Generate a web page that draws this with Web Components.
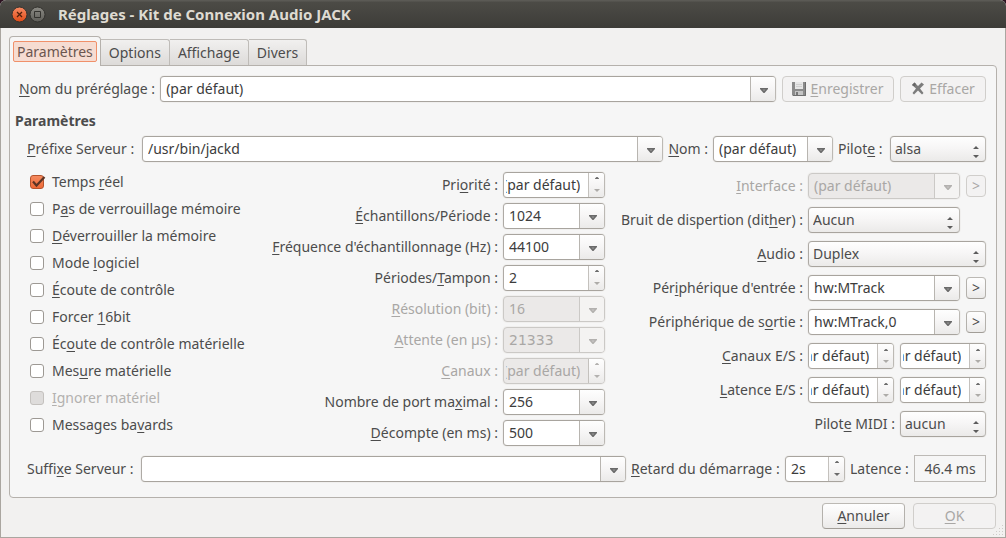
<!DOCTYPE html>
<html lang="fr">
<head>
<meta charset="utf-8">
<title>Réglages - Kit de Connexion Audio JACK</title>
<style>
  html { background: #2c1220; }
  body {
    margin: 0;
    font: 14px/20px "Noto Sans", "Open Sans", sans-serif;
    color: #4c4c4c;
  }
  u {
    text-decoration: underline 1px;
    text-underline-offset: 2px;
    text-decoration-skip-ink: none;
  }
</style>
</head>
<body>

<dialog-window>
  <title-bar slot="title">Réglages - Kit de Connexion Audio JACK</title-bar>

  <tab-list>
    <tab-item selected>Paramètres</tab-item>
    <tab-item>Options</tab-item>
    <tab-item>Affichage</tab-item>
    <tab-item>Divers</tab-item>
  </tab-list>

  <tab-panel>
    <form-row>
      <combo-field stretch value="(par défaut)" style="--label: 136px"><u>N</u>om du préréglage :</combo-field>
      <push-button disabled style="--width: 112px">
        <svg slot="icon" width="16" height="16" viewBox="0 0 16 16" aria-hidden="true">
          <path d="M0 1h14v14H1L0 14z" fill="#8b8b8b"/>
          <path d="M3 1h8v7H3z" fill="#e6e6e6"/>
          <path d="M4 3.500h6M4 5.500h6" stroke="#cfcfcf"/>
          <path d="M3 10h8v5H3z" fill="#c4c4c4"/>
          <path d="M4 11h2v3H4z" fill="#777"/>
          <path d="M13.500 1v13.500H1" fill="none" stroke="#6e6e6e"/>
        </svg><u>E</u>nregistrer</push-button>
      <push-button disabled style="--width: 86px">
        <svg slot="icon" width="16" height="16" viewBox="0 0 16 16" aria-hidden="true">
          <path d="M1 4 3.500 1.500 7 5l3.500-3.500L13 3.500 9 7.500l3.500 4.500-1.500 1.500L7 9.500 3 13.500 1.500 12 5 7.500z" fill="#7c7c7c"/>
          <path d="M1 4 3.500 1.500 5 3 3.500 5.500z" fill="#666"/>
        </svg>Effacer</push-button>
    </form-row>

    <group-title>Paramètres</group-title>

    <form-group>
      <form-row tight>
        <combo-field stretch start value="/usr/bin/jackd" style="--label: 110px"><u>P</u>réfixe Serveur :</combo-field>
        <combo-field start value="(par défaut)" style="--label: 39px; --control: 120px"><u>N</u>om :</combo-field>
        <pick-field start value="alsa" style="--label: 47px; --control: 96px">Pilot<u>e</u> :</pick-field>
      </form-row>

      <form-columns>
        <form-column slot="ticks" style="--row: 27px">
          <tick-field checked>Temps <u>r</u>éel</tick-field>
          <tick-field>P<u>a</u>s de verrouillage mémoire</tick-field>
          <tick-field><u>D</u>éverrouiller la mémoire</tick-field>
          <tick-field>Mode <u>l</u>ogiciel</tick-field>
          <tick-field><u>É</u>coute de contrôle</tick-field>
          <tick-field>Forcer <u>1</u>6bit</tick-field>
          <tick-field>Éc<u>o</u>ute de contrôle matérielle</tick-field>
          <tick-field>Mes<u>u</u>re matérielle</tick-field>
          <tick-field disabled><u>I</u>gnorer matériel</tick-field>
          <tick-field>Messages ba<u>v</u>ards</tick-field>
        </form-column>

        <form-column slot="timing" style="--row: 31px; --control: 102px">
          <spin-field value="(par défaut)" at-min>Pri<u>o</u>rité :</spin-field>
          <combo-field value="1024"><u>É</u>chantillons/Période :</combo-field>
          <combo-field value="44100"><u>F</u>réquence d'échantillonnage (Hz) :</combo-field>
          <spin-field value="2" at-min>Périodes/<u>T</u>ampon :</spin-field>
          <combo-field value="16" disabled><u>R</u>ésolution (bit) :</combo-field>
          <combo-field value="21333" disabled style="--value-font: 'DejaVu Sans'"><u>A</u>ttente (en µs) :</combo-field>
          <spin-field value="(par défaut)" disabled><u>C</u>anaux :</spin-field>
          <combo-field value="256">Nombre de port ma<u>x</u>imal :</combo-field>
          <combo-field value="500"><u>D</u>écompte (en ms) :</combo-field>
        </form-column>

        <form-column slot="devices" style="--row: 34px">
          <form-row end>
            <combo-field value="(par défaut)" disabled style="--control: 152px"><u>I</u>nterface :</combo-field>
            <push-button small disabled>&gt;</push-button>
          </form-row>
          <form-row end inset>
            <pick-field value="Aucun" style="--control: 152px">Bruit de dispertion (dit<u>h</u>er) :</pick-field>
          </form-row>
          <form-row end>
            <pick-field value="Duplex" style="--control: 178px"><u>A</u>udio :</pick-field>
          </form-row>
          <form-row end>
            <combo-field value="hw:MTrack" style="--control: 152px">Pér<u>i</u>phérique d'entrée :</combo-field>
            <push-button small>&gt;</push-button>
          </form-row>
          <form-row end>
            <combo-field value="hw:MTrack,0" style="--control: 152px">Périphérique de s<u>o</u>rtie :</combo-field>
            <push-button small>&gt;</push-button>
          </form-row>
          <form-row end style="--control: 86px">
            <spin-field value="(par défaut)" at-min><u>C</u>anaux E/S :</spin-field>
            <spin-field value="(par défaut)" at-min name="Canaux de sortie"></spin-field>
          </form-row>
          <form-row end style="--control: 86px">
            <spin-field value="(par défaut)" at-min><u>L</u>atence E/S :</spin-field>
            <spin-field value="(par défaut)" at-min name="Latence de sortie"></spin-field>
          </form-row>
          <form-row end>
            <pick-field value="aucun" style="--control: 86px">Pilot<u>e</u> MIDI :</pick-field>
          </form-row>
        </form-column>
      </form-columns>

      <form-row tight>
        <combo-field stretch start value="" style="--label: 109px">Suffi<u>x</u>e Serveur :</combo-field>
        <spin-field start value="2s" style="--label: 149px; --control: 60px"><u>R</u>etard du démarrage :</spin-field>
        <value-field start value="46.4 ms" style="--label: 59px; --control: 72px">Latence :</value-field>
      </form-row>
    </form-group>
  </tab-panel>

  <push-button slot="actions" style="--width: 83px"><u>A</u>nnuler</push-button>
  <push-button slot="actions" disabled style="--width: 83px"><u>O</u>K</push-button>
</dialog-window>

<script>
const FACE = 'linear-gradient(#fefefe, #f7f6f6 45%, #ebeae9)';

const define = (name, render, ready) => {
  customElements.define(name, class extends HTMLElement {
    connectedCallback() {
      if (this.shadowRoot) return;
      this.attachShadow({ mode: 'open' }).innerHTML = render(this);
      if (ready) ready(this);
    }
  });
};

const off = el => el.hasAttribute('disabled') ? 'disabled' : '';
const val = el => (el.getAttribute('value') || '').replace(/"/g, '&quot;');
const aria = el => el.hasAttribute('name') ? `aria-label="${el.getAttribute('name')}"` : '';
const label = el => el.hasAttribute('name') ? '' : '<label for="control"><slot></slot></label>';

/* Rules that every labelled field shares. */
const fieldCss = `
  :host { display: flex; align-items: center; justify-content: flex-end; gap: 5px; min-width: 0; }
  :host([stretch]) { flex: 1; }
  :host([disabled]) label { color: #a9a7a5; }
  label { min-width: var(--label, 0px); white-space: nowrap; text-align: right; }
  :host([start]) label { text-align: left; }
  .box {
    box-sizing: border-box; display: flex; height: 26px; flex: 0 0 var(--control);
    min-width: 0; overflow: hidden; background: #fff;
    border: 1px solid; border-color: #a8a49e #bcb9b4 #a8a49e #aeaaa5; border-radius: 4px;
    box-shadow: 0 0 0 1px #f0efee;
  }
  :host([stretch]) .box { flex: 1; }
  :host([disabled]) .box { background: #ebe9e8; border-color: #cbc9c6; }
  input {
    flex: 1; width: 0; min-width: 0; box-sizing: border-box; margin: 0; border: 0; outline: 0;
    padding: 0 5px; background: none; color: #3c3c3c; font: inherit;
    font-family: var(--value-font, inherit);
  }
  input:disabled { color: #a9a7a5; }
  button { display: grid; place-items: center; margin: 0; padding: 0; border: 0; background: ${FACE}; color: #6b6b6b; }
  button:disabled { color: #b3b1af; background: #f4f3f2; }
  svg { display: block; fill: currentColor; }
`;

define('dialog-window', () => `
  <style>
    :host {
      display: flex; flex-direction: column; box-sizing: border-box; min-height: 100vh;
      position: relative; background: #f2f1f0; border-radius: 6px 6px 0 0; overflow: hidden;
    }
    main {
      flex: 1; box-sizing: border-box; padding: 8px;
      border: 1px solid #aaa6a0; border-top: 0;
    }
    footer { display: flex; justify-content: flex-end; gap: 8px; padding: 5px 1px 0 0; }
    .grip { position: absolute; right: 2px; bottom: 2px; }
  </style>
  <slot name="title"></slot>
  <main>
    <slot></slot>
    <footer><slot name="actions"></slot></footer>
  </main>
  <svg class="grip" width="12" height="12" viewBox="0 0 12 12" fill="#cfccc9" aria-hidden="true">
    <path d="M10 1h1v1h-1zM7 4h1v1H7zM10 4h1v1h-1zM4 7h1v1H4zM7 7h1v1H7zM10 7h1v1h-1zM1 10h1v1H1zM4 10h1v1H4zM7 10h1v1H7zM10 10h1v1h-1z"/>
  </svg>`);

define('title-bar', () => `
  <style>
    :host {
      display: flex; align-items: center; gap: 1px; box-sizing: border-box; height: 28px; padding: 0 11px;
      background: linear-gradient(#5b5a55 0 1px, #4c4b46 2px, #3d3c38); color: #dfdbd2;
    }
    button { margin: 0; padding: 0; border: 0; background: none; display: block; }
    svg { display: block; }
    h1 { margin: 0 0 0 11px; font: bold 15px/20px "Noto Sans", "Open Sans", sans-serif; white-space: nowrap; }
  </style>
  <button type="button" aria-label="Fermer">
    <svg width="17" height="17" viewBox="0 0 17 17">
      <defs><linearGradient id="r" x2="0" y2="1"><stop stop-color="#f78b64"/><stop offset="1" stop-color="#df4a16"/></linearGradient></defs>
      <circle cx="8.500" cy="8.500" r="7.500" fill="url(#r)" stroke="#33322e"/>
      <path d="M6 6l5 5M11 6l-5 5" stroke="#51200c" stroke-width="1.300"/>
    </svg>
  </button>
  <button type="button" aria-label="Agrandir">
    <svg width="17" height="17" viewBox="0 0 17 17">
      <defs><linearGradient id="g" x2="0" y2="1"><stop stop-color="#8b8a84"/><stop offset="1" stop-color="#5e5d58"/></linearGradient></defs>
      <circle cx="8.500" cy="8.500" r="7.500" fill="url(#g)" stroke="#33322e"/>
      <path d="M5.500 5.500h6v6h-6z" fill="none" stroke="#33322e"/>
    </svg>
  </button>
  <h1><slot></slot></h1>`);

define('tab-list', () => `
  <style>:host { display: flex; align-items: flex-end; height: 29px; }</style>
  <slot></slot>`, el => el.setAttribute('role', 'tablist'));

define('tab-item', el => `
  <style>
    :host { display: block; height: 26px; }
    :host([selected]) { height: 30px; margin-bottom: -1px; position: relative; }
    button {
      box-sizing: border-box; height: 100%; margin: 0; padding: 0 8px;
      border: 1px solid #bfbcb8; border-left-width: 0; border-bottom: 0; border-radius: 0 3px 0 0;
      background: linear-gradient(#f1f0ef, #dddbd9); font: inherit; color: inherit;
    }
    :host([selected]) button {
      padding: 3px; border-left-width: 1px; border-radius: 4px 4px 0 0;
      border-color: #b5b1ac; background: #f6f6f6; color: #6b5650;
    }
    span { display: block; line-height: 20px; }
    :host([selected]) span { padding: 0 3px; line-height: 19px; border: 1px solid #f0906a; border-radius: 2px; background: #f6dcd2; }
  </style>
  <button type="button" role="tab" aria-selected="${el.hasAttribute('selected')}"><span><slot></slot></span></button>`);

define('tab-panel', () => `
  <style>
    :host {
      display: block; padding: 10px 9px 15px; background: #f6f6f6;
      border: 1px solid #b5b1ac; border-radius: 0 4px 4px 4px;
    }
  </style>
  <slot></slot>`, el => el.setAttribute('role', 'tabpanel'));

define('group-title', () => `
  <style>
    :host { display: block; }
    h2 { margin: 8px 0 4px -4px; font: bold 14px/22px "Noto Sans", "Open Sans", sans-serif; }
  </style>
  <h2><slot></slot></h2>`);

define('form-group', () => `
  <style>:host { display: flex; flex-direction: column; gap: 7px; padding-left: 8px; }</style>
  <slot></slot>`);

define('form-row', () => `
  <style>
    :host { display: flex; align-items: center; gap: 6px; padding-right: 1px; }
    :host([tight]) { gap: 5px; }
    :host([end]) { justify-content: flex-end; }
    :host([inset]) { padding-right: 27px; }
  </style>
  <slot></slot>`);

define('form-columns', () => `
  <style>:host { display: grid; grid-template-columns: 237fr 341fr 382fr; }</style>
  <slot name="ticks"></slot><slot name="timing"></slot><slot name="devices"></slot>`);

define('form-column', () => `
  <style>:host { display: grid; grid-auto-rows: var(--row); align-content: start; }</style>
  <slot></slot>`);

define('combo-field', el => `
  <style>${fieldCss}
    button { width: 25px; padding: 3px 0 0 2px; border-left: 1px solid #b8b5b0; }
    button:disabled { border-color: #cbc9c6; }
  </style>
  ${label(el)}
  <div class="box">
    <input id="control" type="text" value="${val(el)}" ${aria(el)} ${off(el)}>
    <button type="button" tabindex="-1" aria-label="Ouvrir la liste" ${off(el)}>
      <svg width="8" height="5" viewBox="0 0 8 5"><path d="M0 0h8v1L4.500 5h-1L0 1z"/><path d="M2.500 1.500h3L4 3.200z" fill="#fff" fill-opacity=".3"/></svg>
    </button>
  </div>`);

define('spin-field', el => `
  <style>${fieldCss}
    input { padding: 0 8px 0 2px; }
    input.short { padding-left: 5px; }
    .steps { display: grid; width: 15px; border-left: 1px solid #c4c1bd; background: ${FACE}; }
    button { background: none; }
    button:disabled { background: none; }
    :host([at-min]) .down { color: #adaba8; }
  </style>
  ${label(el)}
  <div class="box">
    <input id="control" type="text" class="${val(el).length < 5 ? 'short' : ''}" value="${val(el)}" ${aria(el)} ${off(el)}>
    <div class="steps">
      <button type="button" tabindex="-1" aria-label="Augmenter" ${off(el)}>
        <svg width="4" height="2" viewBox="0 0 4 2"><path d="M0 2V1.500L1.500 0h1L4 1.500V2z"/></svg>
      </button>
      <button class="down" type="button" tabindex="-1" aria-label="Diminuer" ${off(el)}>
        <svg width="6" height="3" viewBox="0 0 6 3"><path d="M0 0h6L3 3z"/></svg>
      </button>
    </div>
  </div>`, el => {
  /* The entry shows the end of a text that is too long for it. */
  const input = el.shadowRoot.querySelector('input');
  requestAnimationFrame(() => { input.scrollLeft = input.scrollWidth; });
});

define('pick-field', el => `
  <style>${fieldCss}
    .box { display: grid; align-items: center; background: ${FACE}; }
    select {
      grid-area: 1 / 1; appearance: none; width: 100%; height: 24px; margin: 0; padding: 0 20px 0 4px;
      border: 0; outline: 0; background: none; font: inherit; color: #4c4c4c;
    }
    svg { grid-area: 1 / 1; justify-self: end; margin: 5px 6px 0 0; pointer-events: none; color: #5c5c5c; }
  </style>
  ${label(el)}
  <div class="box">
    <select id="control" ${off(el)}><option>${val(el)}</option></select>
    <svg width="6" height="12" viewBox="0 0 6 12" aria-hidden="true"><path d="M0 3h6L3 0zM0 9h6l-3 3z"/></svg>
  </div>`);

define('value-field', el => `
  <style>${fieldCss}
    output {
      box-sizing: border-box; flex: 0 0 var(--control); height: 27px; border: 1px solid #bdbab6;
      line-height: 25px; text-align: center; white-space: nowrap;
    }
  </style>
  ${label(el)}<output id="control">${val(el)}</output>`);

define('tick-field', el => `
  <style>
    :host { display: flex; align-items: center; padding-bottom: 2px; }
    :host([disabled]) { color: #b3b1af; }
    label { display: flex; align-items: center; gap: 8px; padding-left: 3px; white-space: nowrap; }
    .mark { display: grid; }
    input, svg { grid-area: 1 / 1; }
    input {
      appearance: none; box-sizing: border-box; width: 14px; height: 14px; margin: 0;
      border: 1px solid #9d9994; border-radius: 3px; background: #fff;
    }
    input:checked { border-color: #b5532c; background: linear-gradient(#f58a5f, #ee6a37); }
    input:disabled { border-color: #c4c1be; background: #dedcdb; }
    svg { display: none; overflow: visible; pointer-events: none; }
    input:checked + svg { display: block; }
  </style>
  <label>
    <span class="mark">
      <input type="checkbox" ${el.hasAttribute('checked') ? 'checked' : ''} ${off(el)}>
      <svg width="14" height="14" viewBox="0 0 14 14" aria-hidden="true">
        <path d="M3 6.500 6.500 10.500 14.500 2" fill="none" stroke="#5c3425" stroke-width="2.200"/>
      </svg>
    </span>
    <span><slot></slot></span>
  </label>`);

define('push-button', el => `
  <style>
    :host { display: block; }
    button {
      box-sizing: border-box; display: flex; align-items: center; justify-content: center; gap: 2px;
      width: var(--width); height: 26px; margin: 0; padding: 0; white-space: nowrap;
      border: 1px solid; border-color: #bcb9b4 #b4b1ac #a19d97; border-radius: 4px;
      background: ${FACE}; font: inherit; color: inherit;
    }
    :host([small]) button { width: 20px; height: 22px; }
    button:disabled { border-color: #d0cecb; background: #f3f2f2; color: #a9a7a5; }
  </style>
  <button type="button" ${off(el)}><slot name="icon"></slot><span><slot></slot></span></button>`);
</script>
</body>
</html>
